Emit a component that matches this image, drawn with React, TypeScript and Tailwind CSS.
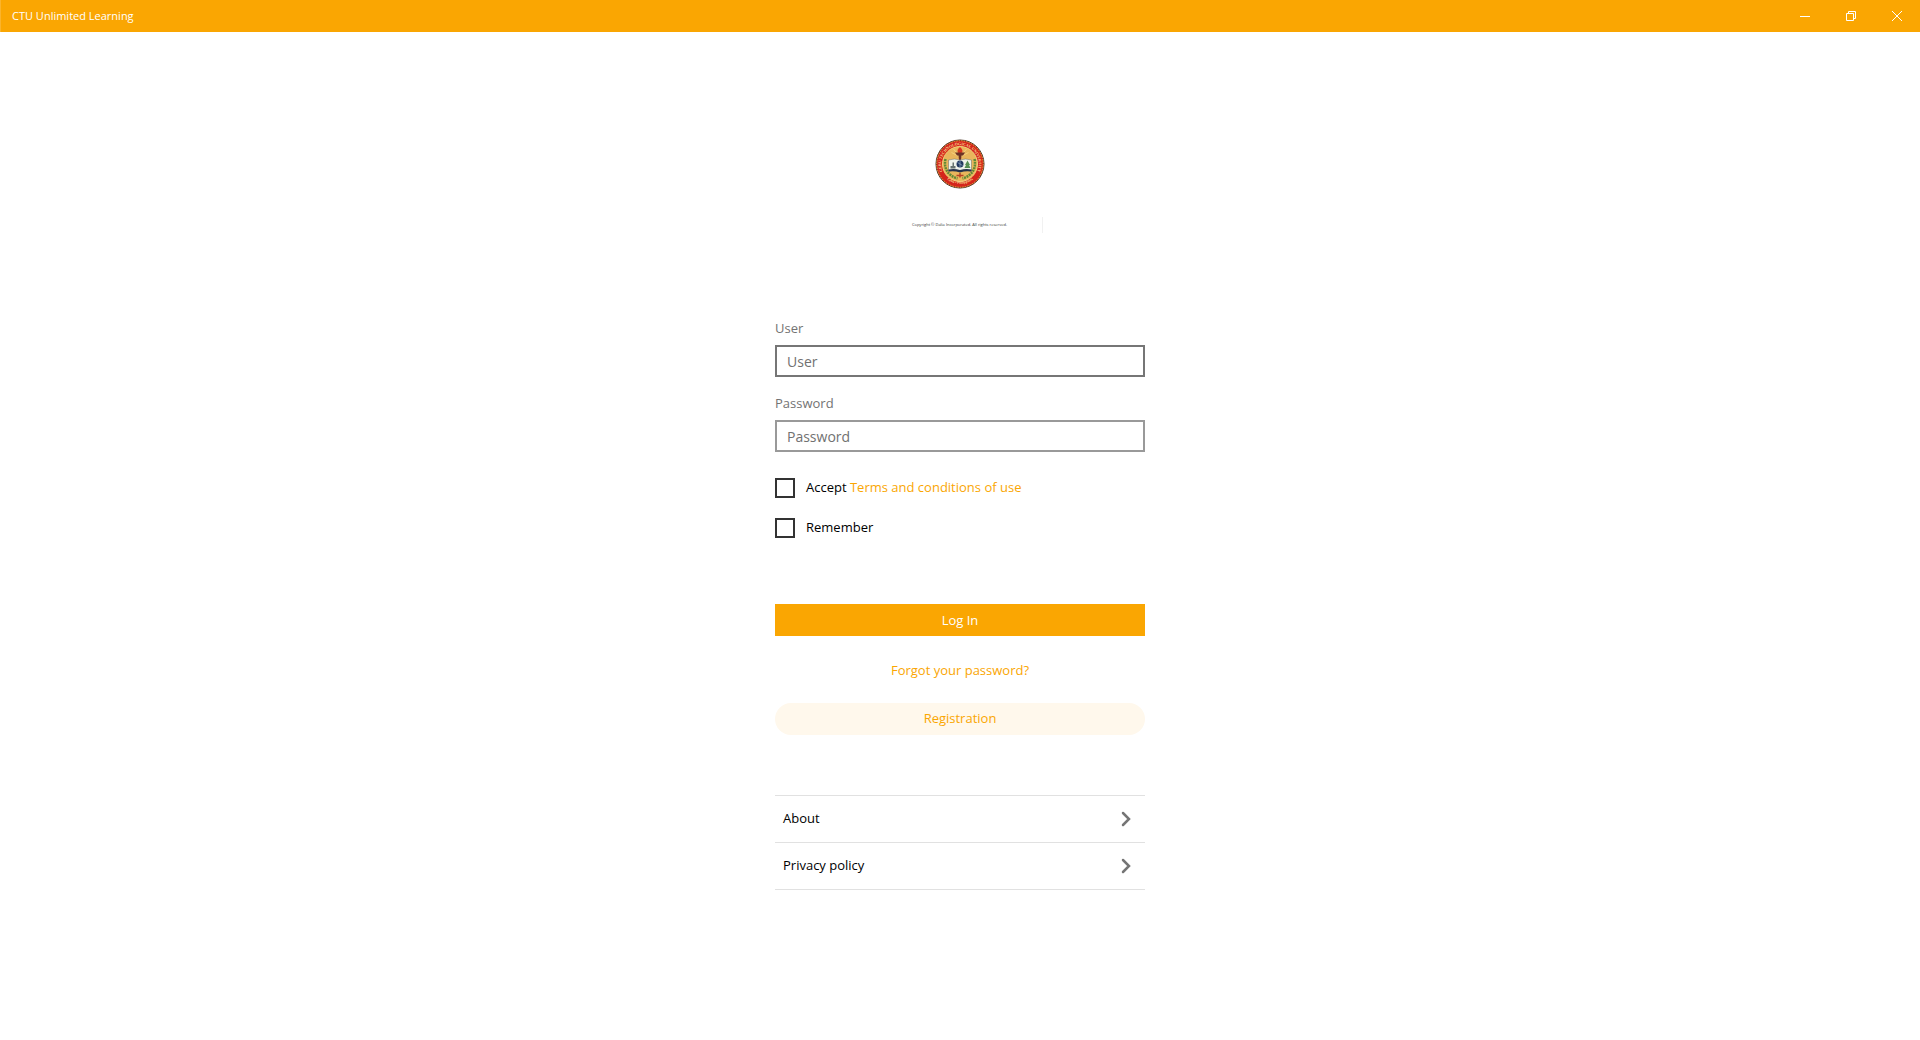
import { useId, useState } from 'react';

function Seal() {
  return (
    <svg viewBox="0 0 100 100" className="size-[50px] overflow-visible" role="img" aria-label="Cebu Technological University seal">
      <defs>
        <path id="seal-top" d="M 22.7 76 A 37.7 37.7 0 1 1 77.3 76" />
        <path id="seal-bottom" d="M 16 73 A 43 43 0 0 0 84 73" />
      </defs>
      <circle cx="50" cy="50" r="48" fill="#d4251c" stroke="#4d3a2c" strokeWidth="2" />
      <circle cx="50" cy="50" r="46.5" fill="none" stroke="#e3a93d" strokeWidth="2" strokeDasharray="3 2" />
      <circle cx="50" cy="50" r="35" fill="#e9b65c" stroke="#f0d27a" strokeWidth="2" />
      <g fill="#f9dc92" fontFamily="Liberation Serif, serif" fontWeight="bold">
        <text fontSize="8">
          <textPath href="#seal-top" startOffset="50%" textAnchor="middle">CEBU TECHNOLOGICAL UNIVERSITY</textPath>
        </text>
        <text fontSize="7">
          <textPath href="#seal-bottom" startOffset="50%" textAnchor="middle">Cebu • Philippines</textPath>
        </text>
      </g>
      <g fill="none" stroke="#5f8a35" strokeWidth="5" strokeDasharray="4 1.5">
        <path d="M21 40 C17 58 25 73 45 79" />
        <path d="M79 40 C83 58 75 73 55 79" />
      </g>
      <path d="M50 36 L33 27 M50 36 L67 27 M50 36 L37 20 M50 36 L63 20" stroke="#f3d17c" strokeWidth="2" />
      <path d="M50 16 C44 21 44 25 47 28 H53 C57 24 54 20 50 16Z" fill="#d8351f" />
      <path d="M40 27 H60 L56 33 H53 L52 42 H48 L47 33 H44Z" fill="#6d3325" />
      <path d="M27 42 Q39 38 50 42 Q61 38 73 42 V64 Q61 61 50 64 Q39 61 27 64Z" fill="#edf3ea" stroke="#6b675c" strokeWidth="1" />
      <path d="M27 61 Q39 59 50 62 Q61 59 73 61 V65 Q61 63 50 67 Q39 63 27 65Z" fill="#26334c" />
      <circle cx="50" cy="50" r="7" fill="#20385f" />
      <path d="M45 47 L55 53 M50 43 V57" stroke="#8aa7c0" strokeWidth="1.5" />
      <path d="M31 54 H41 V59 H31Z M35 47 H38 V54 H35Z" fill="#66736f" />
      <path d="M65 43 L70 52 H68 L71 58 H59 L62 52 H60Z" fill="#559053" />
      <path d="M50 68 V77 M43 73 H57" stroke="#b94225" strokeWidth="3" />
    </svg>
  );
}

function Chevron() {
  return (
    <svg viewBox="0 0 8 14" className="h-3.5 w-2 overflow-visible" fill="none" stroke="#757575" strokeWidth="2.5" aria-hidden="true">
      <path d="M1 1 L7 7 L1 13" strokeLinecap="round" />
    </svg>
  );
}

function Field({ label, type, border }: { label: string; type: string; border: string }) {
  const id = useId();
  return (
    <div className="flex flex-col">
      <label htmlFor={id} className="h-5 leading-5 text-[#737373]">{label}</label>
      <input
        id={id}
        type={type}
        placeholder={label}
        className={`mt-[7px] h-8 w-full border-2 bg-white px-2.5 text-[14px] text-black outline-none placeholder:text-[#717171] ${border}`}
      />
    </div>
  );
}

const boxClass =
  'size-5 shrink-0 appearance-none border-2 border-[#333333] bg-white checked:bg-[#faa602]';

function TitleBar() {
  return (
    <header className="flex h-8 items-center justify-between border-l border-[#fbb42c] bg-[#faa602] pl-[11px] text-white">
      <h1 className="text-[11px] leading-4">CTU Unlimited Learning</h1>
      <div className="flex h-full">
        <button type="button" aria-label="Minimize" className="flex w-[46px] items-center justify-center">
          <svg viewBox="0 0 10 10" className="size-2.5" stroke="currentColor"><path d="M0 5.5H10" /></svg>
        </button>
        <button type="button" aria-label="Restore" className="flex w-[46px] items-center justify-center">
          <svg viewBox="0 0 10 10" className="size-2.5" fill="none" stroke="currentColor">
            <path d="M0.5 2.5H7.5V9.5H0.5Z M2.5 2.5V0.5H9.5V7.5H7.5" />
          </svg>
        </button>
        <button type="button" aria-label="Close" className="flex w-[46px] items-center justify-center">
          <svg viewBox="0 0 10 10" className="size-2.5" stroke="currentColor"><path d="M0 0L10 10M10 0L0 10" /></svg>
        </button>
      </div>
    </header>
  );
}

export default function App() {
  const [accepted, setAccepted] = useState(false);
  const [remember, setRemember] = useState(false);
  return (
    <div className="min-h-screen bg-white font-['Open_Sans',sans-serif] text-[13px] text-black">
      <TitleBar />
      <main className="mx-auto flex w-full max-w-[370px] flex-col pt-[107px]">
        <div className="flex flex-col items-center">
          <Seal />
          <div className="mt-7 flex h-4 w-[166px] items-center justify-center border-r border-[#f1f1f1]">
            <p className="text-[4px] leading-4 whitespace-nowrap text-[#333333]">Copyright © Dalia Incorporated. All rights reserved.</p>
          </div>
        </div>
        <form className="mt-[85px] flex flex-col" onSubmit={(e) => e.preventDefault()}>
          <Field label="User" type="text" border="border-[#767676]" />
          <div className="mt-4">
            <Field label="Password" type="password" border="border-[#999999]" />
          </div>
          <div className="mt-[26px] flex h-5 items-center">
            <input id="accept" type="checkbox" className={boxClass} checked={accepted} onChange={(e) => setAccepted(e.target.checked)} />
            <label htmlFor="accept" className="ml-[11px] whitespace-pre">Accept </label>
            <a href="#terms" className="text-[#faa602]">Terms and conditions of use</a>
          </div>
          <div className="mt-5 flex h-5 items-center">
            <input id="remember" type="checkbox" className={boxClass} checked={remember} onChange={(e) => setRemember(e.target.checked)} />
            <label htmlFor="remember" className="ml-[11px]">Remember</label>
          </div>
          <button type="submit" className="mt-[66px] h-8 bg-[#faa602] pt-0.5 text-white">Log In</button>
          <a href="#forgot" className="mt-6 self-center leading-5 text-[#faa602]">Forgot your password?</a>
          <button type="button" className="mt-[23px] h-8 rounded-full bg-[#fff8ec] text-[#faa602]">Registration</button>
        </form>
        <nav className="mt-[60px] border-t border-[#e1e1e1]">
          {['About', 'Privacy policy'].map((item) => (
            <a key={item} href="#info" className="flex h-[47px] items-center justify-between border-b border-[#e1e1e1] pr-[15px] pl-2">
              {item}
              <Chevron />
            </a>
          ))}
        </nav>
      </main>
    </div>
  );
}
